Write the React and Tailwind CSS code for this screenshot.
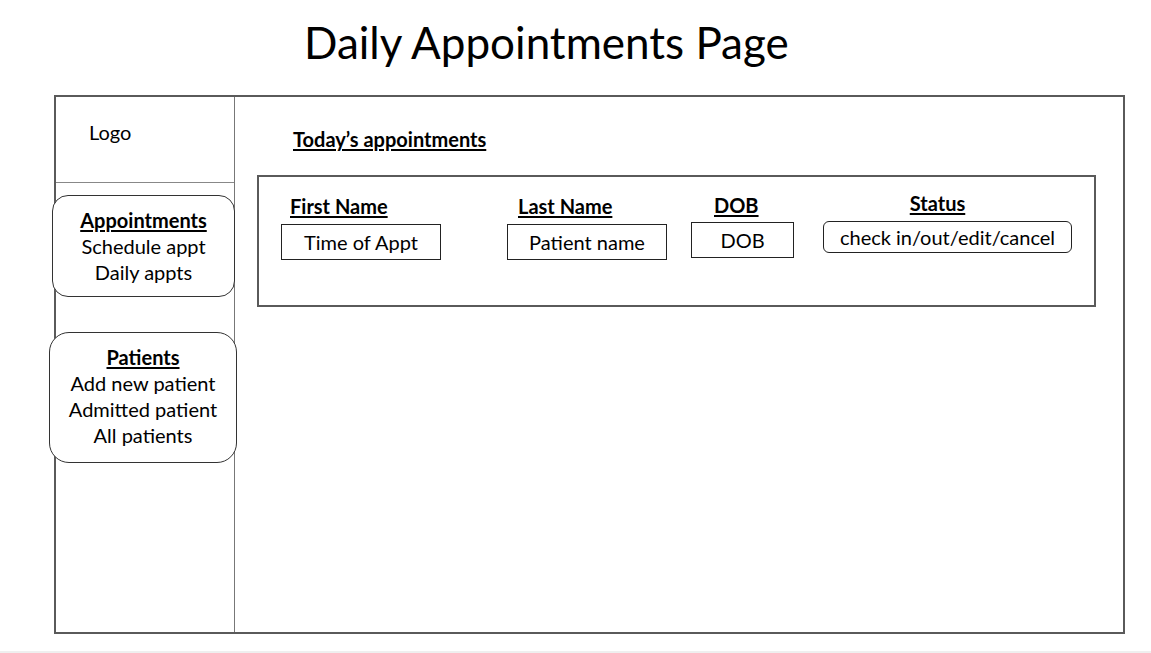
import React from 'react';

const font = { fontFamily: 'Lato, "Open Sans", sans-serif' };

const App = () => {
  return (
    <div className="w-[1151px] h-[653px] bg-white text-black flex flex-col" style={font}>
      {/* Title */}
      <h1 className="pl-[304px] pt-[14px] h-[95px] text-[44px] leading-[56px]">Daily Appointments Page</h1>

      {/* Frame */}
      <div className="ml-[54px] w-[1071px] h-[539px] border-2 border-[#5a5a5a] flex">
        {/* Sidebar */}
        <aside className="w-[179px] border-r border-[#777] flex flex-col shrink-0">
          <div className="h-[86px] border-b border-[#888] pl-[33px] pt-[23px] text-[20px] leading-6">Logo</div>

          <div className="-ml-[4px] mt-[12px] w-[183px] h-[102px] border border-[#333] rounded-[16px] bg-white flex flex-col items-center pt-[11px] text-[20px] leading-[26px]">
            <span className="font-bold underline underline-offset-2">Appointments</span>
            <span>Schedule appt</span>
            <span>Daily appts</span>
          </div>

          <div className="-ml-[7px] mt-[35px] w-[188px] h-[131px] border border-[#333] rounded-[20px] bg-white flex flex-col items-center pt-[11px] text-[20px] leading-[26px]">
            <span className="font-bold underline underline-offset-2">Patients</span>
            <span>Add new patient</span>
            <span>Admitted patient</span>
            <span>All patients</span>
          </div>
        </aside>

        {/* Main */}
        <main className="flex-1 flex flex-col">
          <h2 className="pl-[58px] pt-[30px] text-[20px] leading-6 font-bold underline underline-offset-2">Today’s appointments</h2>

          <div className="ml-[22px] mt-[24px] w-[839px] h-[132px] border-2 border-[#5a5a5a] flex items-start text-[20px]">
            <div className="ml-[22px] mt-[16px] flex flex-col">
              <span className="ml-[9px] h-[31px] leading-[26px] font-bold underline underline-offset-2">First Name</span>
              <div className="w-[160px] h-[36px] border border-[#222] flex items-center justify-center">Time of Appt</div>
            </div>

            <div className="ml-[66px] mt-[16px] flex flex-col">
              <span className="ml-[11px] h-[31px] leading-[26px] font-bold underline underline-offset-2">Last Name</span>
              <div className="w-[160px] h-[36px] border border-[#222] flex items-center justify-center">Patient name</div>
            </div>

            <div className="ml-[24px] mt-[15px] flex flex-col">
              <span className="ml-[23px] h-[30px] leading-[26px] font-bold underline underline-offset-2">DOB</span>
              <div className="w-[103px] h-[36px] border border-[#222] flex items-center justify-center">DOB</div>
            </div>

            <div className="ml-[29px] mt-[13px] flex flex-col items-center w-[249px]">
              <span className="-ml-[20px] h-[31px] leading-[26px] font-bold underline underline-offset-2">Status</span>
              <div className="w-[249px] h-[32px] border border-[#222] rounded-[6px] flex items-center justify-center">check in/out/edit/cancel</div>
            </div>
          </div>
        </main>
      </div>

      <div className="mt-auto h-[2px] bg-[#efefef]" />
    </div>
  );
};

export default App;
